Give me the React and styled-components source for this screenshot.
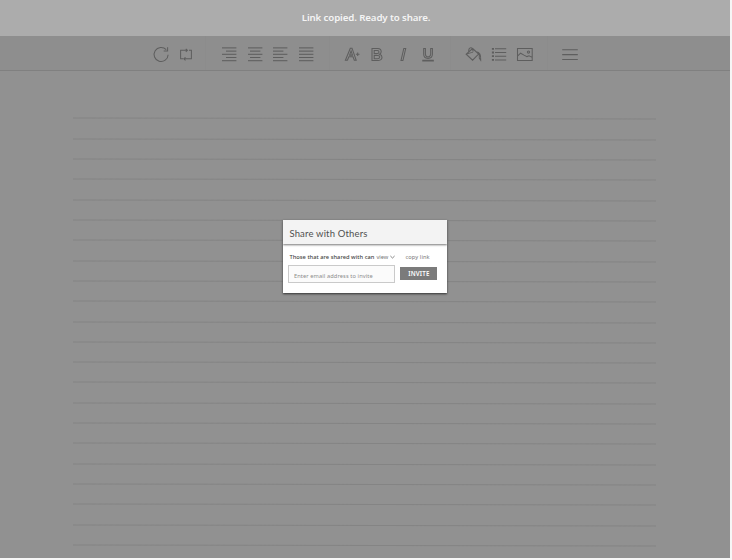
import React from "react";
import styled, { createGlobalStyle } from "styled-components";

const GlobalStyle = createGlobalStyle`
  html, body { margin: 0; background: #f6f6f6; }
  * { box-sizing: border-box; }
  button, input { margin: 0; padding: 0; border: 0; background: none; }
`;

const Screen = styled.div`
  position: relative;
  width: 730px;
  height: 558px;
  overflow: hidden;
  background: #919191;
  font-family: "Noto Sans", sans-serif;
`;

const Banner = styled.div`
  height: 36px;
  background: #acacac;
  color: #f4f4f4;
  font-size: 9.7px;
  font-weight: 600;
  line-height: 36px;
  text-align: center;
  letter-spacing: -0.12px;
  padding-left: 2px;
`;

const Toolbar = styled.div`
  display: flex;
  height: 35px;
  background: #8e8e8e;
  border-bottom: 1px solid #808080;
`;

const ToolGroup = styled.div`
  display: flex;
  align-items: center;
  justify-content: ${(p) => p.$align || "center"};
  width: ${(p) => p.$width}px;
  padding: 3px ${(p) => (p.$align === "flex-end" ? 6 : 0)}px 0 ${(p) => (p.$align === "flex-start" ? 9.5 : 0)}px;
  border-right: 1px solid ${(p) => (p.$last ? "transparent" : "#8c8c8c")};
`;

const Tool = styled.button`
  display: flex;
  align-items: center;
  justify-content: center;
  width: 25.6px;
  height: 24px;
  svg {
    width: 18px;
    height: 18px;
    overflow: visible;
    fill: none;
    stroke: #5e5e5e;
    stroke-width: 1.05;
  }
`;

const Sheet = styled.div`
  display: flex;
  flex-direction: column;
  gap: 19.32px;
  padding: 47.4px 74px 0 73px;
`;

const Rule = styled.div`
  flex: none;
  height: 1px;
  background: #848484;
  transform: skewY(0.09deg);
`;

const Dialog = styled.div`
  position: absolute;
  left: 283.4px;
  top: 220px;
  width: 164px;
  height: 72.5px;
  background: #fff;
  box-shadow: 0 1px 2px #333;
`;

const DialogHeader = styled.div`
  height: 24px;
  padding-left: 6px;
  background: #f3f3f3;
  box-shadow: 0 1px 2px #777;
  color: #505050;
  font-family: Lato, sans-serif;
  font-size: 9.5px;
  line-height: 27px;
  letter-spacing: 0.17px;
  white-space: nowrap;
`;

const AccessRow = styled.div`
  display: flex;
  align-items: center;
  height: 12px;
  margin-top: 6.5px;
  padding-left: 6px;
  font-size: 5.7px;
  line-height: 12px;
  white-space: nowrap;
`;

const AccessLabel = styled.span`
  width: 87px;
  color: #444;
  font-weight: 500;
  letter-spacing: 0.04px;
`;

const AccessSelect = styled.button`
  && {
    display: flex;
    align-items: center;
    gap: 1.5px;
    width: 29px;
    color: #777;
    font: 5.7px/12px "Noto Sans", sans-serif;
  }
  svg { width: 5px; height: 4px; margin-top: 1px; fill: none; stroke: #666; stroke-width: 0.8; }
`;

const CopyLink = styled.span`
  color: #777;
  letter-spacing: 0.1px;
`;

const InviteRow = styled.div`
  display: flex;
  gap: 5px;
  padding: 2px 0 0 5px;
`;

const EmailInput = styled.input`
  && {
    width: 107px;
    height: 18px;
    padding: 4px 0 0 4.5px;
    border: 1px solid #cacaca;
    background: #fbfbfb;
    font: 5.7px "Noto Sans", sans-serif;
    letter-spacing: 0.1px;
  }
  &::placeholder { color: #8c8c8c; opacity: 1; }
`;

const InviteButton = styled.button`
  && {
    width: 37px;
    height: 13px;
    margin-top: 2.5px;
    background: #7b7b7b;
    color: #fff;
    font: 600 6.2px/13px "Noto Sans", sans-serif;
    letter-spacing: 0.17px;
  }
`;

const Bars = ({ inset }) => (
  <svg viewBox="0 0 18 18">
    {[1.9, 5.1, 8.3, 11.5, 14.7].map((y, i) => {
      const [a, b] = i % 2 ? inset : [0, 0];
      return <path key={y} d={`M${2 + a} ${y}H${16.4 - b}`} />;
    })}
  </svg>
);

const RefreshIcon = () => (
  <svg viewBox="0 0 18 18">
    <path d="M14.2 3.7A7 7 0 1 0 16.1 8.7M15.6 1.2V4.9H11.7" />
  </svg>
);

const RepeatIcon = () => (
  <svg viewBox="0 0 18 18">
    <path d="M6.4 4.3H3.6V12.8H6M8.2 4.3H9.6M12 4.3H14.4V12.8H7.4M8.8 2.8L10.4 4.3 8.8 5.8M8.5 11.3L6.8 12.8 8.5 14.3M6.4 4.3H10" />
  </svg>
);

const FontIcon = () => (
  <svg viewBox="0 0 18 18">
    <path d="M2.4 14.3L7.3 2.2H9L13.2 14.3H11.3L10 10.8H5.9L4.4 14.3ZM6.6 9.1H9.5L8.1 4.8ZM12.9 8.3H16.5M14.7 6.5V10.1" />
  </svg>
);

const BoldIcon = () => (
  <svg viewBox="0 0 18 18">
    <path d="M4 2.5H9.8Q13.2 2.7 13.2 5.6 13.2 7.5 11.6 8.3 14 9 14 11.3 14 14.2 10.4 14.5H4ZM6.2 4.4V7.6H9.4Q11 7.5 11 6 11 4.5 9.4 4.4ZM6.2 9.4V12.7H9.7Q11.8 12.6 11.8 11 11.8 9.5 9.7 9.4Z" />
  </svg>
);

const ItalicIcon = () => (
  <svg viewBox="0 0 18 18">
    <path d="M9.8 2.5H11.7L8.9 14.5H7Z" />
  </svg>
);

const UnderlineIcon = () => (
  <svg viewBox="0 0 18 18">
    <path d="M4.7 2.5H6.4V8.3Q6.5 10.9 9 10.9T11.7 8.3V2.5H13.4V8.3Q13.3 12.4 9 12.4T4.7 8.3ZM3.8 14.2H14.3V15H3.8Z" />
  </svg>
);

const FillIcon = () => (
  <svg viewBox="0 0 18 18">
    <path d="M2.2 8.2L8.7 2.5 14.6 8 8.6 14.2ZM2.5 8Q8.5 6 9 6.5M4.7 5.9Q4.5 1.9 6.8 1.7 8.7 1.6 9.1 5.6M12.2 5.8Q17.3 6.3 16.7 14.2L15.3 12V8.2" />
  </svg>
);

const ListIcon = () => (
  <svg viewBox="0 0 18 18">
    <path d="M5 2.8H16.2M5 6.5H16.2M5 10.2H16.2M5 13.9H16.2" />
    <path strokeWidth="1.8" d="M1.9 2.8H4M1.9 6.5H4M1.9 10.2H4M1.9 13.9H4" />
  </svg>
);

const ImageIcon = () => (
  <svg viewBox="0 0 18 18">
    <path d="M1.5 2.5H16.2V14.4H1.5ZM1.5 10.1L4.6 7.2 8 9.1 11 10.6 13 9.8 16.2 11.4" />
    <circle cx="12.5" cy="6" r="1.1" />
  </svg>
);

const MenuIcon = () => (
  <svg viewBox="0 0 18 18">
    <path d="M1.2 3.7H16.8M1.2 8.6H16.8M1.2 13.5H16.8" />
  </svg>
);

export default function App() {
  return (
    <>
      <GlobalStyle />
      <Screen>
        <Banner>Link copied. Ready to share.</Banner>
        <Toolbar>
          <ToolGroup $width={206} $align="flex-end">
            <Tool><RefreshIcon /></Tool>
            <Tool><RepeatIcon /></Tool>
          </ToolGroup>
          <ToolGroup $width={124}>
            <Tool><Bars inset={[4, 0]} /></Tool>
            <Tool><Bars inset={[2, 2]} /></Tool>
            <Tool><Bars inset={[0, 4]} /></Tool>
            <Tool><Bars inset={[0, 0]} /></Tool>
          </ToolGroup>
          <ToolGroup $width={121}>
            <Tool><FontIcon /></Tool>
            <Tool><BoldIcon /></Tool>
            <Tool><ItalicIcon /></Tool>
            <Tool><UnderlineIcon /></Tool>
          </ToolGroup>
          <ToolGroup $width={97}>
            <Tool><FillIcon /></Tool>
            <Tool><ListIcon /></Tool>
            <Tool><ImageIcon /></Tool>
          </ToolGroup>
          <ToolGroup $width={60} $align="flex-start" $last>
            <Tool><MenuIcon /></Tool>
          </ToolGroup>
        </Toolbar>
        <Sheet>
          {Array.from({ length: 22 }, (_, i) => <Rule key={i} />)}
        </Sheet>
        <Dialog>
          <DialogHeader>Share with Others</DialogHeader>
          <AccessRow>
            <AccessLabel>Those that are shared with can</AccessLabel>
            <AccessSelect>
              view
              <svg viewBox="0 0 5 4"><path d="M0.4 1L2.5 3 4.6 1" /></svg>
            </AccessSelect>
            <CopyLink>copy link</CopyLink>
          </AccessRow>
          <InviteRow>
            <EmailInput placeholder="Enter email address to invite" />
            <InviteButton>INVITE</InviteButton>
          </InviteRow>
        </Dialog>
      </Screen>
    </>
  );
}
